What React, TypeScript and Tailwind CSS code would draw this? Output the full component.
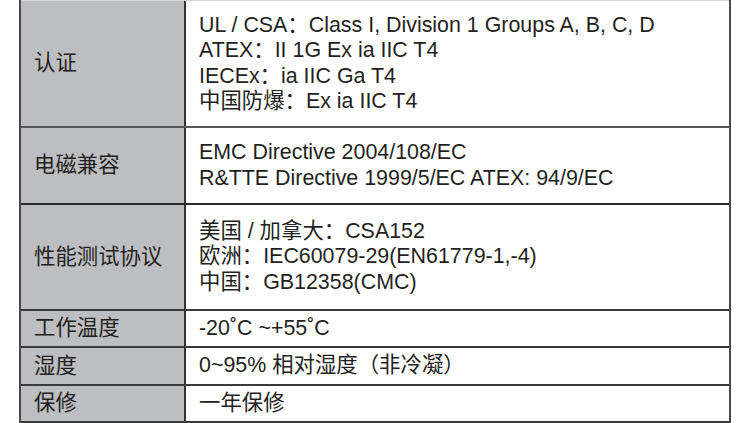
const rows: { label: string; lines: string[]; h: string; border: string }[] = [
  {
    label: '认证',
    lines: [
      'UL / CSA：Class I, Division 1 Groups A, B, C, D',
      'ATEX：II 1G Ex ia IIC T4',
      'IECEx：ia IIC Ga T4',
      '中国防爆：Ex ia IIC T4',
    ],
    h: 'h-[128px] border-t border-t-[#d6d6d6]',
    border: 'border-b-[#58585a]',
  },
  {
    label: '电磁兼容',
    lines: ['EMC Directive 2004/108/EC', 'R&TTE Directive 1999/5/EC ATEX: 94/9/EC'],
    h: 'h-[77px]',
    border: 'border-b-[#2a2a2a]',
  },
  {
    label: '性能测试协议',
    lines: ['美国 / 加拿大：CSA152', '欧洲：IEC60079-29(EN61779-1,-4)', '中国：GB12358(CMC)'],
    h: 'h-[106px]',
    border: 'border-b-[#3a3a3a]',
  },
  { label: '工作温度', lines: ['-20˚C ~+55˚C'], h: 'h-[37px]', border: 'border-b-[#3a3a3a]' },
  { label: '湿度', lines: ['0~95% 相对湿度（非冷凝）'], h: 'h-[38px]', border: 'border-b-[#3a3a3a]' },
  { label: '保修', lines: ['一年保修'], h: 'h-[37px]', border: 'border-b-[#3a3a3a]' },
];

export default function App() {
  return (
    <div
      className="w-[750px] h-[423px] overflow-hidden bg-white pl-[19px] text-[#231f20]"
      style={{ fontFamily: '"Liberation Sans", "Noto Sans CJK SC", sans-serif' }}
    >
      <div className="w-[712px] border-x-2 border-x-[#4a4a4a]">
        {rows.map((r) => (
          <div key={r.label} className={`flex border-b-2 ${r.h} ${r.border}`}>
            <div className="w-[165px] shrink-0 flex items-center bg-[#bdbec1] border-r-2 border-r-[#333333] pl-[13px] text-[21.4px]">
              {r.label}
            </div>
            <div className="flex-1 flex flex-col justify-center pl-[13px] text-[21.4px] leading-[25.5px]">
              {r.lines.map((l) => (
                <div key={l}>{l}</div>
              ))}
            </div>
          </div>
        ))}
      </div>
    </div>
  );
}
